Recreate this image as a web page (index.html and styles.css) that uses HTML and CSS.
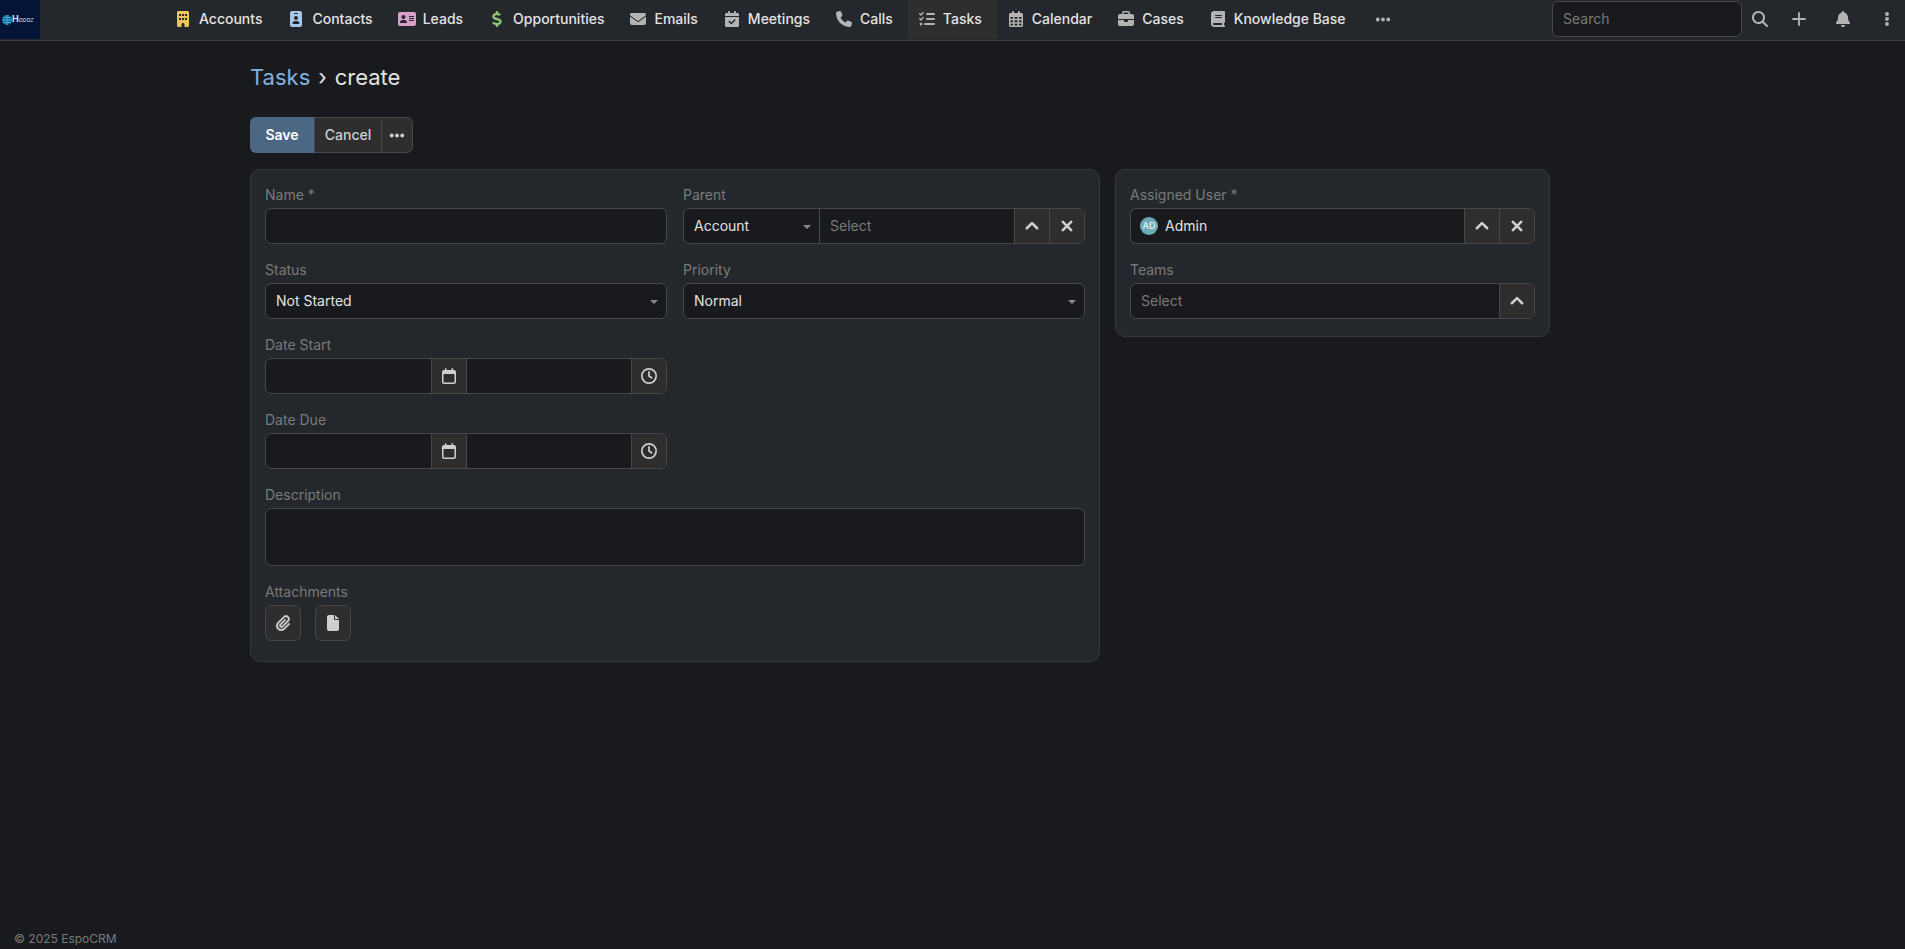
FILE: index.html
```html
<!DOCTYPE html>
<html lang="en">
<head>
<meta charset="utf-8">
<title>Tasks › create</title>
<link rel="stylesheet" href="styles.css">
</head>
<body>
<svg class="sprite" aria-hidden="true">
  <symbol id="i-building" viewBox="0 0 384 512"><path fill-rule="evenodd" d="M48 0C21.500 0 0 21.500 0 48V464c0 26.500 21.500 48 48 48h96V432c0-26.500 21.500-48 48-48s48 21.500 48 48v80h96c26.500 0 48-21.500 48-48V48c0-26.500-21.500-48-48-48H48zM64 96h64v64H64zM160 96h64v64h-64zM256 96h64v64h-64zM64 224h64v64H64zM160 224h64v64h-64zM256 224h64v64h-64z"/></symbol>
  <symbol id="i-badge" viewBox="0 0 384 512"><path fill-rule="evenodd" d="M64 0C28.700 0 0 28.700 0 64V448c0 35.300 28.700 64 64 64H320c35.300 0 64-28.700 64-64V64c0-35.300-28.700-64-64-64H64zm96 320h64c44.200 0 80 35.800 80 80c0 8.800-7.200 16-16 16H96c-8.800 0-16-7.200-16-16c0-44.200 35.800-80 80-80zm-32-96a64 64 0 1 1 128 0 64 64 0 1 1-128 0zM144 64h96c8.800 0 16 7.200 16 16s-7.200 16-16 16H144c-8.800 0-16-7.200-16-16s7.200-16 16-16z"/></symbol>
  <symbol id="i-card" viewBox="0 0 576 512"><path fill-rule="evenodd" d="M64 32C28.700 32 0 60.700 0 96V416c0 35.300 28.700 64 64 64H512c35.300 0 64-28.700 64-64V96c0-35.300-28.700-64-64-64H64zm80 256h64c44.200 0 80 35.800 80 80c0 8.800-7.200 16-16 16H80c-8.800 0-16-7.200-16-16c0-44.200 35.800-80 80-80zm-32-96a64 64 0 1 1 128 0 64 64 0 1 1-128 0zM352 160H512v32H352zM352 224H512v32H352zM352 288H512v32H352z"/></symbol>
  <symbol id="i-dollar" viewBox="0 0 320 512"><path stroke="currentColor" stroke-width="12" d="M160 0c17.700 0 32 14.300 32 32V67.700c1.600 .2 3.100 .4 4.700 .7c.4 .1 .7 .1 1.100 .2l48 8.800c17.400 3.200 28.900 19.900 25.700 37.200s-19.900 28.900-37.200 25.700l-47.500-8.700c-31.300-4.600-58.900-1.500-78.300 6.200s-27.200 18.300-29 28.100c-2 10.700-.5 16.700 1.200 20.400c1.800 3.900 5.500 8.300 12.800 13.200c16.300 10.700 41.300 17.700 73.700 26.300l2.900 .8c28.600 7.600 63.600 16.800 89.600 33.800c14.200 9.300 27.600 21.900 35.900 39.500c8.500 17.900 10.300 37.900 6.400 59.200c-6.900 38-33.100 63.400-65.600 76.700c-13.700 5.600-28.600 9.200-44.400 11V480c0 17.700-14.300 32-32 32s-32-14.300-32-32V445.100c-.4-.1-.9-.1-1.300-.2l-.2 0 0 0c-24.400-3.800-64.500-14.300-91.500-26.300c-16.100-7.200-23.400-26.100-16.200-42.200s26.100-23.400 42.200-16.200c20.900 9.300 55.300 18.500 75.200 21.600c31.900 4.700 58.200 2 76-5.300c16.900-6.900 24.600-16.900 26.800-28.900c1.900-10.600 .4-16.700-1.300-20.400c-1.900-4-5.600-8.400-13-13.300c-16.400-10.700-41.500-17.700-74-26.300l-2.800-.7 0 0C119.400 279.300 84.400 270 58.400 253c-14.200-9.300-27.500-22-35.800-39.600c-8.400-17.900-10.100-37.900-6.100-59.200C23.700 116 52.300 91.200 84.800 78.300c13.300-5.300 27.900-8.900 43.200-11V32c0-17.700 14.300-32 32-32z"/></symbol>
  <symbol id="i-mail" viewBox="0 0 512 512"><path d="M48 64C21.500 64 0 85.500 0 112c0 15.100 7.100 29.300 19.200 38.400L236.800 313.600c11.400 8.500 27 8.500 38.400 0L492.800 150.400c12.100-9.100 19.200-23.300 19.200-38.400c0-26.500-21.500-48-48-48H48zM0 176V384c0 35.300 28.700 64 64 64H448c35.300 0 64-28.700 64-64V176L294.400 339.200c-22.800 17.100-54 17.100-76.800 0L0 176z"/></symbol>
  <symbol id="i-calcheck" viewBox="0 0 448 512"><path fill-rule="evenodd" d="M128 0c17.700 0 32 14.300 32 32V64H288V32c0-17.700 14.300-32 32-32s32 14.300 32 32V64h48c26.500 0 48 21.500 48 48v48H0V112C0 85.500 21.500 64 48 64H96V32c0-17.700 14.300-32 32-32zM0 192H448V464c0 26.500-21.500 48-48 48H48c-26.500 0-48-21.500-48-48V192zM329 305c9.400-9.400 9.400-24.600 0-33.900s-24.600-9.400-33.900 0l-95 95-47-47c-9.400-9.400-24.600-9.400-33.900 0s-9.400 24.600 0 33.900l64 64c9.400 9.400 24.600 9.400 33.900 0L329 305z"/></symbol>
  <symbol id="i-phone" viewBox="0 0 512 512"><path d="M164.900 24.600c-7.700-18.600-28-28.500-47.400-23.200l-88 24C12.100 30.200 0 46 0 64C0 311.400 200.600 512 448 512c18 0 33.800-12.100 38.600-29.500l24-88c5.300-19.400-4.600-39.700-23.200-47.400l-96-40c-16.300-6.800-35.200-2.100-46.300 11.600L304.700 368C234.300 334.700 177.300 277.700 144 207.300L193.300 167c13.700-11.200 18.400-30 11.600-46.300l-40-96z"/></symbol>
  <symbol id="i-tasks" viewBox="0 0 512 512"><path fill="none" stroke="currentColor" stroke-width="46" stroke-linecap="round" stroke-linejoin="round" d="M24 88l38 38 66-76M24 248l38 38 66-76"/><path fill="none" stroke="currentColor" stroke-width="64" stroke-linecap="round" d="M256 96H480M256 256H480M192 416H480"/><circle cx="64" cy="416" r="44"/></symbol>
  <symbol id="i-caldays" viewBox="0 0 448 512"><path fill-rule="evenodd" d="M128 0c17.700 0 32 14.300 32 32V64H288V32c0-17.700 14.300-32 32-32s32 14.300 32 32V64h48c26.500 0 48 21.500 48 48V464c0 26.500-21.500 48-48 48H48c-26.500 0-48-21.500-48-48V112C0 85.500 21.500 64 48 64H96V32c0-17.700 14.300-32 32-32zM48 192v56h80v-56zM176 192v56h96v-56zM320 192v56h80v-56zM48 296v64h80v-64zM176 296v64h96v-64zM320 296v64h80v-64zM48 408v56h80v-56zM176 408v56h96v-56zM320 408v56h80v-56z"/></symbol>
  <symbol id="i-case" viewBox="0 0 512 512"><path fill-rule="evenodd" d="M184 48H328c4.400 0 8 3.600 8 8V96H176V56c0-4.400 3.600-8 8-8zm-56 8V96H64C28.700 96 0 124.700 0 160v96H512V160c0-35.300-28.700-64-64-64H384V56c0-30.900-25.100-56-56-56H184c-30.900 0-56 25.100-56 56zM512 288H320v32c0 17.700-14.300 32-32 32H224c-17.700 0-32-14.300-32-32V288H0V416c0 35.300 28.700 64 64 64H448c35.300 0 64-28.700 64-64V288z"/></symbol>
  <symbol id="i-book" viewBox="0 0 448 512"><path fill-rule="evenodd" d="M96 0C43 0 0 43 0 96V416c0 53 43 96 96 96H416c17.700 0 32-14.300 32-32s-14.300-32-32-32V384c17.700 0 32-14.300 32-32V32c0-17.700-14.300-32-32-32H96zm0 384H352v64H96c-17.700 0-32-14.300-32-32s14.300-32 32-32zM144 128H336c8.800 0 16 7.200 16 16s-7.200 16-16 16H144c-8.800 0-16-7.200-16-16s7.200-16 16-16zm0 64H336c8.800 0 16 7.200 16 16s-7.200 16-16 16H144c-8.800 0-16-7.200-16-16s7.200-16 16-16z"/></symbol>
  <symbol id="i-dots" viewBox="0 0 448 512"><circle cx="56" cy="272" r="62"/><circle cx="224" cy="272" r="62"/><circle cx="392" cy="272" r="62"/></symbol>
  <symbol id="i-vdots" viewBox="0 0 128 512"><circle cx="64" cy="96" r="62"/><circle cx="64" cy="256" r="62"/><circle cx="64" cy="416" r="62"/></symbol>
  <symbol id="i-search" viewBox="0 0 512 512"><path d="M416 208c0 45.900-14.900 88.300-40 122.700L502.600 457.400c12.500 12.500 12.500 32.800 0 45.300s-32.800 12.500-45.300 0L330.700 376c-34.400 25.200-76.800 40-122.700 40C93.100 416 0 322.900 0 208S93.100 0 208 0S416 93.100 416 208zM208 352a144 144 0 1 0 0-288 144 144 0 1 0 0 288z"/></symbol>
  <symbol id="i-plus" viewBox="0 0 448 512"><path fill="none" stroke="currentColor" stroke-width="60" stroke-linecap="round" d="M224 64V448M32 256H416"/></symbol>
  <symbol id="i-bell" viewBox="0 0 448 512"><path d="M224 0c-17.700 0-32 14.300-32 32V51.200C119 66 64 130.600 64 208v18.800c0 47-17.300 92.400-48.500 127.600l-7.400 8.300c-8.400 9.400-10.400 22.900-5.300 34.400S19.400 416 32 416H416c12.600 0 24-7.400 29.200-18.900s3.100-25-5.300-34.400l-7.400-8.300C401.300 319.200 384 273.900 384 226.800V208c0-77.400-55-142-128-156.800V32c0-17.700-14.300-32-32-32zm45.300 493.300c12-12 18.700-28.300 18.700-45.300H160c0 17 6.700 33.300 18.700 45.300s28.300 18.700 45.300 18.700s33.300-6.700 45.300-18.700z"/></symbol>
  <symbol id="i-up" viewBox="0 0 512 512"><path fill="none" stroke="currentColor" stroke-width="80" stroke-linecap="round" stroke-linejoin="round" d="M90 328L256 162L422 328"/></symbol>
  <symbol id="i-x" viewBox="0 0 384 512"><path fill="none" stroke="currentColor" stroke-width="84" stroke-linecap="round" d="M58 122L326 390M326 122L58 390"/></symbol>
  <symbol id="i-cal" viewBox="0 0 448 512"><path fill-rule="evenodd" d="M120 0c13.300 0 24 10.700 24 24V64H304V24c0-13.300 10.700-24 24-24s24 10.700 24 24V64h32c35.300 0 64 28.700 64 64V448c0 35.300-28.700 64-64 64H64c-35.300 0-64-28.700-64-64V128C0 92.700 28.700 64 64 64H96V24c0-13.300 10.700-24 24-24zM48 192V448c0 8.800 7.200 16 16 16H384c8.800 0 16-7.200 16-16V192z"/></symbol>
  <symbol id="i-clock" viewBox="0 0 512 512"><g fill="none" stroke="currentColor" stroke-width="54" stroke-linecap="round" stroke-linejoin="round"><circle cx="256" cy="256" r="229"/><path d="M256 120V256L340 312"/></g></symbol>
  <symbol id="i-clip" viewBox="0 0 448 512"><path stroke="currentColor" stroke-width="10" d="M364.200 83.800c-24.400-24.400-64-24.400-88.400 0l-184 184c-42.100 42.100-42.100 110.300 0 152.400s110.300 42.100 152.400 0l152-152c10.900-10.900 28.700-10.900 39.600 0s10.900 28.700 0 39.600l-152 152c-64 64-167.600 64-231.600 0s-64-167.600 0-231.600l184-184c46.300-46.300 121.300-46.300 167.600 0s46.300 121.300 0 167.600l-176 176c-28.600 28.600-75 28.600-103.600 0s-28.600-75 0-103.600l144-144c10.900-10.900 28.700-10.900 39.600 0s10.900 28.700 0 39.600l-144 144c-6.700 6.700-6.700 17.700 0 24.400s17.700 6.700 24.400 0l176-176c24.400-24.400 24.400-64 0-88.400z"/></symbol>
  <symbol id="i-file" viewBox="0 0 384 512"><path d="M0 64C0 28.700 28.700 0 64 0H224V128c0 17.700 14.300 32 32 32H384V448c0 35.300-28.700 64-64 64H64c-35.300 0-64-28.700-64-64V64zm384 64H256V0L384 128z"/></symbol>
</svg>

<header class="navbar">
  <a class="logo" href="#" aria-label="Home">
    <svg class="logo-globe" viewBox="0 0 10 10"><circle cx="5" cy="5" r="5" fill="#1d6f9c"/><path d="M0 5H10M5 0V10M1 2.500H9M1 7.500H9" stroke="#39a9d6" fill="none"/></svg><span class="logo-text"><b>H</b>OOOZ</span>
  </a>
  <nav class="tabs">
    <a href="#"><svg class="icon yellow"><use href="#i-building"/></svg>Accounts</a>
    <a href="#"><svg class="icon blue"><use href="#i-badge"/></svg>Contacts</a>
    <a href="#"><svg class="icon pink"><use href="#i-card"/></svg>Leads</a>
    <a href="#"><svg class="icon green"><use href="#i-dollar"/></svg>Opportunities</a>
    <a href="#"><svg class="icon"><use href="#i-mail"/></svg>Emails</a>
    <a href="#"><svg class="icon"><use href="#i-calcheck"/></svg>Meetings</a>
    <a href="#"><svg class="icon"><use href="#i-phone"/></svg>Calls</a>
    <a href="#" class="active" aria-current="page"><svg class="icon"><use href="#i-tasks"/></svg>Tasks</a>
    <a href="#"><svg class="icon"><use href="#i-caldays"/></svg>Calendar</a>
    <a href="#"><svg class="icon"><use href="#i-case"/></svg>Cases</a>
    <a href="#"><svg class="icon"><use href="#i-book"/></svg>Knowledge Base</a>
    <button class="tool" type="button" aria-label="More"><svg class="icon"><use href="#i-dots"/></svg></button>
  </nav>
  <div class="tools">
    <input class="search" type="text" placeholder="Search" aria-label="Search">
    <button class="tool find" type="button" aria-label="Run search"><svg class="icon"><use href="#i-search"/></svg></button>
    <button class="tool" type="button" aria-label="Create"><svg class="icon"><use href="#i-plus"/></svg></button>
    <button class="tool" type="button" aria-label="Notifications"><svg class="icon"><use href="#i-bell"/></svg></button>
    <button class="tool menu" type="button" aria-label="Menu"><svg class="icon"><use href="#i-vdots"/></svg></button>
  </div>
</header>

<main class="content">
  <h1 class="title"><a href="#">Tasks</a><span>›</span>create</h1>
  <div class="actions">
    <button class="save" type="button">Save</button>
    <button class="cancel" type="button">Cancel</button>
    <button class="more" type="button" aria-label="More actions"><svg class="icon"><use href="#i-dots"/></svg></button>
  </div>

  <form class="record">
    <section class="panel main-panel">
      <div class="field">
        <label for="name">Name *</label>
        <div class="group"><input id="name" type="text"></div>
      </div>
      <div class="field">
        <label for="parent">Parent</label>
        <div class="group">
          <div class="select parent-type"><select aria-label="Parent type"><option>Account</option></select></div>
          <input id="parent" type="text" placeholder="Select">
          <button type="button" aria-label="Select parent"><svg class="icon"><use href="#i-up"/></svg></button>
          <button type="button" aria-label="Clear parent"><svg class="icon"><use href="#i-x"/></svg></button>
        </div>
      </div>
      <div class="field">
        <label for="status">Status</label>
        <div class="group"><div class="select"><select id="status"><option>Not Started</option></select></div></div>
      </div>
      <div class="field">
        <label for="priority">Priority</label>
        <div class="group"><div class="select"><select id="priority"><option>Normal</option></select></div></div>
      </div>
      <div class="field first">
        <label for="start">Date Start</label>
        <div class="group">
          <input id="start" type="text">
          <button type="button" aria-label="Pick start date"><svg class="icon"><use href="#i-cal"/></svg></button>
          <input type="text" aria-label="Start time">
          <button type="button" aria-label="Pick start time"><svg class="icon"><use href="#i-clock"/></svg></button>
        </div>
      </div>
      <div class="field first">
        <label for="due">Date Due</label>
        <div class="group">
          <input id="due" type="text">
          <button type="button" aria-label="Pick due date"><svg class="icon"><use href="#i-cal"/></svg></button>
          <input type="text" aria-label="Due time">
          <button type="button" aria-label="Pick due time"><svg class="icon"><use href="#i-clock"/></svg></button>
        </div>
      </div>
      <div class="field wide">
        <label for="description">Description</label>
        <textarea id="description"></textarea>
      </div>
      <div class="field wide">
        <span class="label" id="att">Attachments</span>
        <div class="attach" role="group" aria-labelledby="att">
          <button type="button" aria-label="Attach file"><svg class="icon"><use href="#i-clip"/></svg></button>
          <button type="button" aria-label="Attach document"><svg class="icon"><use href="#i-file"/></svg></button>
        </div>
      </div>
    </section>

    <section class="panel side-panel">
      <div class="field">
        <label for="user">Assigned User *</label>
        <div class="group">
          <span class="avatar" aria-hidden="true">AD</span>
          <input id="user" class="user" type="text" value="Admin">
          <button type="button" aria-label="Select user"><svg class="icon"><use href="#i-up"/></svg></button>
          <button type="button" aria-label="Clear user"><svg class="icon"><use href="#i-x"/></svg></button>
        </div>
      </div>
      <div class="field">
        <label for="teams">Teams</label>
        <div class="group">
          <input id="teams" type="text" placeholder="Select">
          <button type="button" aria-label="Select teams"><svg class="icon"><use href="#i-up"/></svg></button>
        </div>
      </div>
    </section>
  </form>
</main>

<footer class="footer">© 2025 EspoCRM</footer>
</body>
</html>
```
FILE: styles.css
```css
:root {
  --bg: #191a1d;
  --panel: #24272b;
  --line: #46474b;
  --panel-line: #37383c;
  --button: #2e2e2e;
  --text: #e3e3e3;
  --soft: #cfcfcf;
  --muted: #7a7a7a;
  --icon: #b3b3b3;
}

* { box-sizing: border-box; }

body {
  margin: 0;
  min-height: 100vh;
  display: flex;
  flex-direction: column;
  background: var(--bg);
  color: var(--text);
  font: 14px/20px Inter, "Liberation Sans", sans-serif;
}

a { color: #82b1e0; text-decoration: none; }

button, input, select, textarea {
  font: inherit;
  color: inherit;
  margin: 0;
  padding: 0;
  border: 0;
  border-radius: 0;
  background: none;
  outline: 0;
}

input::placeholder { color: var(--muted); opacity: 1; }

.sprite { position: absolute; width: 0; height: 0; }
.icon { display: block; width: 22px; height: 16px; fill: currentColor; color: var(--icon); overflow: visible; }
.yellow { color: #edc555; }
.blue { color: #a4c9e8; }
.pink { color: #d8a0cb; }
.green { color: #8fc973; }

.navbar {
  display: flex;
  height: 41px;
  padding-bottom: 1px;
  background: var(--panel);
  border-bottom: 1px solid #3b3c40;
}

.logo {
  display: flex;
  align-items: center;
  width: 40px;
  padding-left: 2px;
  background: #031437;
  color: #dfe8f4;
}
.logo-globe { width: 10px; height: 10px; }
.logo-text { font-size: 5px; line-height: 8px; font-style: italic; }
.logo-text b { font-size: 9px; font-style: normal; }

.tabs { display: flex; margin-left: 124px; }
.tabs a {
  display: flex;
  align-items: center;
  gap: 5px;
  padding: 0 15px 2px 8px;
  color: var(--text);
  font-weight: 500;
  white-space: nowrap;
}
.tabs a.active { background: var(--button); }

.tool {
  display: flex;
  align-items: center;
  justify-content: center;
  width: 44px;
  padding-bottom: 2px;
}
.tools { display: flex; margin-left: auto; }
.search {
  width: 190px;
  height: 36px;
  margin-top: 1px;
  padding: 0 10px 1px;
  background: var(--bg);
  border: 1px solid var(--line);
  border-radius: 6px;
}
.tool.find { width: 35px; }
.tool.menu { width: 36px; margin-left: 4px; }
.tools .menu { margin-left: 4px; }

.content {
  width: 100%;
  max-width: 1550px;
  padding-left: 250px;
}

.title {
  display: flex;
  gap: 8px;
  margin: 22px 0 26px;
  font-size: 22px;
  line-height: 28px;
  font-weight: 400;
}

.actions { display: flex; height: 36px; margin-bottom: 16px; }
.actions button { display: flex; align-items: center; justify-content: center; }
.save {
  width: 64px;
  background: #4b6783;
  color: #fff;
  font-weight: 600;
  border-radius: 6px 0 0 6px;
}
.cancel, .more {
  background: var(--button);
  border: 1px solid var(--line);
  color: var(--soft);
  font-weight: 500;
}
.cancel { width: 68px; }
.more { width: 32px; margin-left: -1px; border-radius: 0 6px 6px 0; }
.more .icon { color: var(--soft); }

.record {
  display: grid;
  grid-template-columns: 850fr 435fr;
  align-items: start;
  gap: 15px;
}
.panel {
  display: grid;
  gap: 16px;
  padding: 15px 14px 17px;
  background: var(--panel);
  border: 1px solid var(--panel-line);
  border-radius: 10px;
}
.main-panel { grid-template-columns: 1fr 1fr; padding-bottom: 20px; }
.first { grid-column: 1; }
.wide { grid-column: 1 / -1; }

.field { display: flex; flex-direction: column; gap: 3px; min-width: 0; }
.field label, .label { color: var(--muted); }

.group {
  display: flex;
  height: 36px;
  overflow: hidden;
  background: var(--bg);
  border: 1px solid var(--line);
  border-radius: 6px;
}
.group input { flex: 1; min-width: 0; padding: 0 10px; }
.group > * + input, .group button { border-left: 1px solid var(--line); }
.group button {
  display: flex;
  align-items: center;
  justify-content: center;
  width: 35px;
  background: var(--button);
}
.group .icon, .attach .icon { color: var(--soft); }

.select { position: relative; flex: 1; display: flex; }
.select select { flex: 1; appearance: none; padding: 0 10px; }
.select::after {
  content: "";
  position: absolute;
  right: 8px;
  top: 16px;
  border: 4px solid transparent;
  border-top-color: #8a8a8a;
  border-bottom: 0;
}
.parent-type { flex: 0 0 135px; }

.group .avatar {
  align-self: center;
  width: 18px;
  height: 18px;
  margin-left: 9px;
  border-radius: 50%;
  background: #6fabb5;
  color: #dcecee;
  font-size: 9px;
  line-height: 18px;
  font-weight: 600;
  text-align: center;
}
.group .avatar + .user { border-left: 0; padding-left: 7px; }

textarea {
  height: 58px;
  padding: 7px 10px;
  resize: none;
  background: var(--bg);
  border: 1px solid var(--line);
  border-radius: 6px;
}

.attach { display: flex; gap: 14px; }
.attach button {
  display: flex;
  align-items: center;
  justify-content: center;
  width: 36px;
  height: 36px;
  background: var(--button);
  border: 1px solid var(--line);
  border-radius: 6px;
}

.footer {
  margin-top: auto;
  padding: 0 14px;
  color: var(--muted);
  font-size: 12px;
}
```
